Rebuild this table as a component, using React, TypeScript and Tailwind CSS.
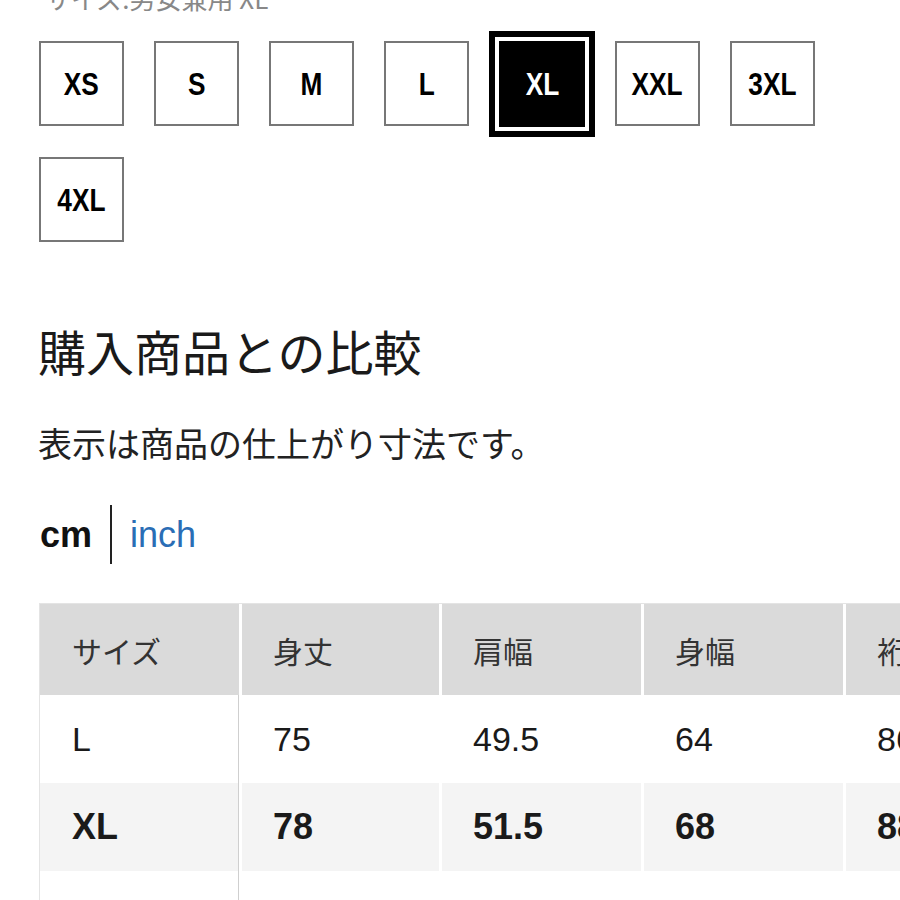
import React from "react";

const sizes = ["XS", "S", "M", "L", "XL", "XXL", "3XL", "4XL"];
const selected = "XL";

const headers = ["サイズ", "身丈", "肩幅", "身幅", "裄丈", "袖丈"];
const rows = [
  { size: "L", values: ["75", "49.5", "64", "86", "60"], bold: false },
  { size: "XL", values: ["78", "51.5", "68", "88", "61"], bold: true },
  { size: "XXL", values: ["80", "53.5", "72", "90", "62"], bold: false },
];
const widths = ["w-[199px]", "w-[197px]", "w-[199px]", "w-[199px]", "w-[199px]", "w-[199px]"];

function SizeBox({ label }: { label: string }) {
  const active = label === selected;
  return (
    <div
      className={
        active
          ? "w-[86px] h-[86px] flex items-center justify-center bg-black text-white shadow-[0_0_0_4px_#fff,0_0_0_10px_#000]"
          : "w-[85px] h-[85px] flex items-center justify-center border-2 border-[#777] bg-white text-black"
      }
    >
      <span className="inline-block scale-x-[0.82] font-['Liberation_Sans',sans-serif] font-bold text-[32px] leading-none">
        {label}
      </span>
    </div>
  );
}

export default function App() {
  return (
    <div className="w-[900px] h-[900px] overflow-hidden bg-white font-['Liberation_Sans','Noto_Sans_CJK_JP',sans-serif]">
      <div className="flex flex-col">
        <p className="mt-[-15px] ml-[45px] h-[26px] text-[26px] leading-none text-[#888] font-['Noto_Sans_CJK_JP',sans-serif] whitespace-nowrap">
          サイズ:男女兼用 XL
        </p>

        <div className="mt-[30px] ml-[39px] w-[822px] flex flex-wrap gap-[30px]">
          {sizes.map((s) => (
            <SizeBox key={s} label={s} />
          ))}
        </div>

        <h2 className="mt-[84px] ml-[38px] text-[48px] leading-none text-[#1a1a1a] font-['Noto_Sans_CJK_JP',sans-serif] font-normal">
          購入商品との比較
        </h2>

        <p className="mt-[52px] ml-[38px] text-[34px] leading-none text-[#222] font-['Noto_Sans_CJK_JP',sans-serif]">
          表示は商品の仕上がり寸法です。
        </p>

        <div className="mt-[45px] ml-[40px] flex items-center text-[36px] leading-none">
          <span className="font-bold text-[#111]">cm</span>
          <span className="mx-[18px] w-[2px] h-[59px] bg-[#222]" />
          <span className="text-[#2a6db5]">inch</span>
        </div>

        <div className="mt-[39px] ml-[39px] border-l border-t border-[#e4e4e4]">
          <div className="flex gap-[3px] bg-white">
            {headers.map((h, i) => (
              <div
                key={h}
                className={`${widths[i]} shrink-0 h-[91px] bg-[#dadada] flex items-center ${i === 0 ? "pl-[32px]" : "pl-[31px]"} text-[30px] leading-none text-[#333] font-['Noto_Sans_CJK_JP',sans-serif]`}
              >
                {h}
              </div>
            ))}
          </div>
          {rows.map((r) => (
            <div key={r.size} className="flex gap-[3px] bg-white">
              {[r.size, ...r.values].map((v, i) => (
                <div
                  key={i}
                  className={`${widths[i]} shrink-0 h-[88px] flex items-center ${i === 0 ? "pl-[32px] border-r border-[#cfcfcf]" : "pl-[31px]"} ${r.bold ? "bg-[#f4f4f4] font-bold text-[36px]" : "bg-white text-[34px]"} leading-none text-[#1a1a1a]`}
                >
                  {v}
                </div>
              ))}
            </div>
          ))}
        </div>
      </div>
    </div>
  );
}
